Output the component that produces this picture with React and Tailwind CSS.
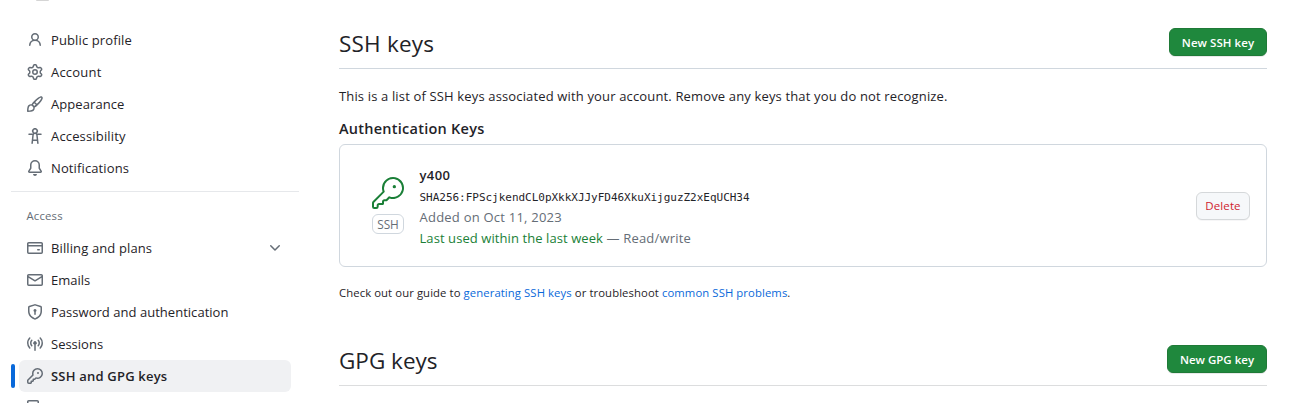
import { GoKey } from "react-icons/go";

const ICONS = {
  person: "M10.561 8.073a6.005 6.005 0 0 1 3.432 5.142.75.75 0 1 1-1.498.07 4.5 4.5 0 0 0-8.99 0 .75.75 0 0 1-1.498-.07 6.004 6.004 0 0 1 3.431-5.142 3.999 3.999 0 1 1 5.123 0ZM10.5 5a2.5 2.5 0 1 0-5 0 2.5 2.5 0 0 0 5 0Z",
  gear: "M8 0a8.2 8.2 0 0 1 .701.031C9.444.095 9.99.645 10.16 1.29l.288 1.107c.018.066.079.158.212.224.231.114.454.243.668.386.123.082.233.09.299.071l1.103-.303c.644-.176 1.392.021 1.82.63.27.385.506.792.704 1.218.315.675.111 1.422-.364 1.891l-.814.806c-.049.048-.098.147-.088.294.016.257.016.515 0 .772-.01.147.038.246.088.294l.814.806c.475.469.679 1.216.364 1.891a7.977 7.977 0 0 1-.704 1.217c-.428.61-1.176.807-1.82.63l-1.102-.302c-.067-.019-.177-.011-.3.071a5.909 5.909 0 0 1-.668.386c-.133.066-.194.158-.211.224l-.29 1.106c-.168.646-.715 1.196-1.458 1.26a8.006 8.006 0 0 1-1.402 0c-.743-.064-1.289-.614-1.458-1.26l-.289-1.106c-.018-.066-.079-.158-.212-.224a5.738 5.738 0 0 1-.668-.386c-.123-.082-.233-.09-.299-.071l-1.103.303c-.644.176-1.392-.021-1.82-.63a8.12 8.12 0 0 1-.704-1.218c-.315-.675-.111-1.422.363-1.891l.815-.806c.05-.048.098-.147.088-.294a6.214 6.214 0 0 1 0-.772c.01-.147-.038-.246-.088-.294l-.815-.806C.635 6.045.431 5.298.746 4.623a7.92 7.92 0 0 1 .704-1.217c.428-.61 1.176-.807 1.82-.63l1.102.302c.067.019.177.011.3-.071.214-.143.437-.272.668-.386.133-.066.194-.158.211-.224l.29-1.106C6.009.645 6.556.095 7.299.03 7.53.01 7.764 0 8 0Zm-.571 1.525c-.036.003-.108.036-.137.146l-.289 1.105c-.147.561-.549.967-.998 1.189-.173.086-.34.183-.5.29-.417.278-.97.423-1.529.27l-1.103-.303c-.109-.03-.175.016-.195.045-.22.312-.412.644-.573.99-.014.031-.021.11.059.19l.815.806c.411.406.562.957.53 1.456a4.709 4.709 0 0 0 0 .582c.032.499-.119 1.05-.53 1.456l-.815.806c-.081.08-.073.159-.059.19.162.346.353.677.573.989.02.03.085.076.195.046l1.102-.303c.56-.153 1.113-.008 1.53.27.161.107.328.204.501.29.447.222.85.629.997 1.189l.289 1.105c.029.109.101.143.137.146a6.6 6.6 0 0 0 1.142 0c.036-.003.108-.036.137-.146l.289-1.105c.147-.561.549-.967.998-1.189.173-.086.34-.183.5-.29.417-.278.97-.423 1.529-.27l1.103.303c.109.029.175-.016.195-.045.22-.313.411-.644.573-.99.014-.031.021-.11-.059-.19l-.815-.806c-.411-.406-.562-.957-.53-1.456a4.709 4.709 0 0 0 0-.582c-.032-.499.119-1.05.53-1.456l.815-.806c.081-.08.073-.159.059-.19a6.464 6.464 0 0 0-.573-.989c-.02-.03-.085-.076-.195-.046l-1.102.303c-.56.153-1.113.008-1.53-.27a4.44 4.44 0 0 0-.501-.29c-.447-.222-.85-.629-.997-1.189l-.289-1.105c-.029-.11-.101-.143-.137-.146a6.6 6.6 0 0 0-1.142 0ZM11 8a3 3 0 1 1-6 0 3 3 0 0 1 6 0ZM9.5 8a1.5 1.5 0 1 0-3.001.001A1.5 1.5 0 0 0 9.5 8Z",
  paintbrush: "M11.134 1.535c.7-.509 1.416-.942 2.076-1.155.649-.21 1.463-.267 2.069.34.603.601.568 1.411.368 2.07-.202.668-.624 1.39-1.125 2.096-1.011 1.424-2.496 2.987-3.775 4.249-1.098 1.084-2.132 1.839-3.04 2.3a3.744 3.744 0 0 1-1.055 3.217c-.431.431-1.065.691-1.657.861-.614.177-1.294.287-1.914.357A21.151 21.151 0 0 1 .797 16H.743l.007-.75H.749L.742 16a.75.75 0 0 1-.743-.742l.743-.008-.742.007v-.054a21.25 21.25 0 0 1 .13-2.284c.067-.647.187-1.287.358-1.914.17-.591.43-1.226.86-1.657a3.746 3.746 0 0 1 3.227-1.054c.466-.893 1.225-1.907 2.314-2.982 1.271-1.255 2.833-2.75 4.245-3.777ZM1.62 13.089c-.051.464-.086.929-.104 1.395.466-.018.932-.053 1.396-.104a10.511 10.511 0 0 0 1.668-.309c.526-.151.856-.325 1.011-.48a2.25 2.25 0 1 0-3.182-3.182c-.155.155-.329.485-.48 1.01a10.515 10.515 0 0 0-.309 1.67Zm10.396-10.34c-1.224.89-2.605 2.189-3.822 3.384l1.718 1.718c1.21-1.205 2.51-2.597 3.387-3.833.47-.662.78-1.227.912-1.662.134-.444.032-.551.009-.575h-.001V1.78c-.014-.014-.113-.113-.548.027-.432.14-.995.462-1.655.942Zm-4.832 7.266-.001.001a9.859 9.859 0 0 0 1.63-1.142L7.155 7.216a9.7 9.7 0 0 0-1.161 1.607c.482.302.889.71 1.19 1.192Z",
  accessibility: "M9.923 5.302c.063.063.122.129.178.198H14A.75.75 0 0 1 14 7h-3.3l.578 5.163.362 2.997a.75.75 0 0 1-1.49.18L9.868 13H6.132l-.282 2.34a.75.75 0 0 1-1.49-.18l.362-2.997L5.3 7H2a.75.75 0 0 1 0-1.5h3.9a2.54 2.54 0 0 1 .176-.198 3 3 0 1 1 3.847 0ZM9.2 7.073h-.001a1.206 1.206 0 0 0-2.398 0L6.305 11.5h3.39ZM9.5 3a1.5 1.5 0 1 0-3.001.001A1.5 1.5 0 0 0 9.5 3Z",
  bell: "M8 16a2 2 0 0 0 1.985-1.75c.017-.137-.097-.25-.235-.25h-3.5c-.138 0-.252.113-.235.25A2 2 0 0 0 8 16ZM3 5a5 5 0 0 1 10 0v2.947c0 .05.015.098.042.139l1.703 2.555A1.519 1.519 0 0 1 13.482 13H2.518a1.516 1.516 0 0 1-1.263-2.36l1.703-2.554A.255.255 0 0 0 3 7.947Zm5-3.5A3.5 3.5 0 0 0 4.5 5v2.947c0 .346-.102.683-.294.97l-1.703 2.556a.017.017 0 0 0-.003.01l.001.006c0 .002.002.004.004.006l.006.004.007.001h10.964l.007-.001.006-.004.004-.006.001-.007a.017.017 0 0 0-.003-.01l-1.703-2.554a1.745 1.745 0 0 1-.294-.97V5A3.5 3.5 0 0 0 8 1.5Z",
  card: "M10.75 9a.75.75 0 0 0 0 1.5h1.5a.75.75 0 0 0 0-1.5h-1.5ZM0 3.75C0 2.784.784 2 1.75 2h12.5c.966 0 1.75.784 1.75 1.75v8.5A1.75 1.75 0 0 1 14.25 14H1.75A1.75 1.75 0 0 1 0 12.25ZM14.5 6.5h-13v5.75c0 .138.112.25.25.25h12.5a.25.25 0 0 0 .25-.25Zm0-2.75a.25.25 0 0 0-.25-.25H1.75a.25.25 0 0 0-.25.25V5h13Z",
  mail: "M1.75 2h12.5c.966 0 1.75.784 1.75 1.75v8.5A1.75 1.75 0 0 1 14.25 14H1.75A1.75 1.75 0 0 1 0 12.25v-8.5C0 2.784.784 2 1.75 2ZM1.5 12.251c0 .138.112.25.25.25h12.5a.25.25 0 0 0 .25-.25V5.809L8.38 9.397a.75.75 0 0 1-.76 0L1.5 5.809v6.442Zm13-8.181v-.32a.25.25 0 0 0-.25-.25H1.75a.25.25 0 0 0-.25.25v.32L8 7.88Z",
  shield: "m8.533.133 5.25 1.68A1.75 1.75 0 0 1 15 3.48V7c0 1.566-.32 3.182-1.303 4.682-.983 1.498-2.585 2.813-5.032 3.855a1.697 1.697 0 0 1-1.33 0c-2.447-1.042-4.049-2.357-5.032-3.855C1.32 10.182 1 8.566 1 7V3.48a1.755 1.755 0 0 1 1.217-1.667l5.25-1.68a1.748 1.748 0 0 1 1.066 0Zm-.61 1.429.001.001-5.25 1.68a.251.251 0 0 0-.174.237V7c0 1.36.275 2.666 1.057 3.859.784 1.194 2.121 2.342 4.366 3.298a.196.196 0 0 0 .154 0c2.245-.957 3.582-2.103 4.366-3.297C13.225 9.666 13.5 8.358 13.5 7V3.48a.25.25 0 0 0-.174-.238l-5.25-1.68a.25.25 0 0 0-.153 0ZM9.5 6.5c0 .536-.286 1.032-.75 1.3v2.45a.75.75 0 0 1-1.5 0V7.8A1.5 1.5 0 1 1 9.5 6.5Z",
  broadcast: "M8.75 8.582v5.668a.75.75 0 0 1-1.5 0V8.582a1.75 1.75 0 1 1 1.5 0Zm3.983-7.125a.75.75 0 0 1 1.06.026A7.976 7.976 0 0 1 16 7c0 2.139-.84 4.083-2.207 5.517a.75.75 0 1 1-1.086-1.034A6.474 6.474 0 0 0 14.5 7a6.474 6.474 0 0 0-1.793-4.483.75.75 0 0 1 .026-1.06Zm-9.466 0c.3.286.312.76.026 1.06A6.474 6.474 0 0 0 1.5 7a6.47 6.47 0 0 0 1.793 4.483.75.75 0 0 1-1.086 1.034A7.973 7.973 0 0 1 0 7c0-2.139.84-4.083 2.207-5.517a.75.75 0 0 1 1.06-.026Zm8.556 2.321A4.988 4.988 0 0 1 13 7a4.988 4.988 0 0 1-1.177 3.222.75.75 0 1 1-1.146-.967A3.487 3.487 0 0 0 11.5 7c0-.86-.309-1.645-.823-2.255a.75.75 0 0 1 1.146-.967Zm-6.492.958A3.48 3.48 0 0 0 4.5 7a3.48 3.48 0 0 0 .823 2.255.75.75 0 0 1-1.146.967A4.981 4.981 0 0 1 3 7a4.982 4.982 0 0 1 1.188-3.236.75.75 0 1 1 1.143.972Z",
  key: "M10.5 0a5.499 5.499 0 1 1-1.288 10.848l-.932.932a.749.749 0 0 1-.53.22H7v.75a.749.749 0 0 1-.22.53l-.5.5a.749.749 0 0 1-.53.22H5v.75a.749.749 0 0 1-.22.53l-.5.5a.749.749 0 0 1-.53.22h-2A1.75 1.75 0 0 1 0 14.25v-2c0-.199.079-.389.22-.53l4.932-4.932A5.5 5.5 0 0 1 10.5 0Zm-4 5.5c-.001.431.069.86.205 1.269a.75.75 0 0 1-.181.768L1.5 12.56v1.69c0 .138.112.25.25.25h1.69l.06-.06v-1.19a.75.75 0 0 1 .75-.75h1.19l.06-.06v-1.19a.75.75 0 0 1 .75-.75h1.19l1.023-1.025a.75.75 0 0 1 .768-.18A4 4 0 1 0 6.5 5.5ZM11 6a1 1 0 1 1 0-2 1 1 0 0 1 0 2Z",
  chevron: "M12.78 5.22a.749.749 0 0 1 0 1.06l-4.25 4.25a.749.749 0 0 1-1.06 0L3.22 6.28a.749.749 0 1 1 1.06-1.06L8 8.939l3.72-3.719a.749.749 0 0 1 1.06 0Z",
  organization: "M1.75 0h8.5C11.216 0 12 .784 12 1.75v12.5c0 .966-.784 1.75-1.75 1.75h-8.5A1.75 1.75 0 0 1 0 14.25V1.75C0 .784.784 0 1.75 0Zm0 1.5a.25.25 0 0 0-.25.25v12.5c0 .138.112.25.25.25h8.5a.25.25 0 0 0 .25-.25V1.75a.25.25 0 0 0-.25-.25Z",
};

function Icon({ name }) {
  return (
    <svg viewBox="0 0 16 16" className="size-4 shrink-0 fill-[#656d76]" aria-hidden="true">
      <path fillRule="evenodd" d={ICONS[name]} />
    </svg>
  );
}

function NavItem({ icon, label, tracking, active, expandable }) {
  return (
    <li className="flex h-8 items-center">
      <span className={active ? "mr-1 h-6 w-1 rounded-md bg-[#0969da]" : "mr-1 h-6 w-1"} />
      <a
        className={`flex h-8 w-[272px] items-center gap-2 rounded-md px-2 text-[13px] ${tracking} ${
          active ? "bg-[#f0f1f3] font-[580]" : ""
        }`}
      >
        <Icon name={icon} />
        <span className="grow leading-5">{label}</span>
        {expandable && <Icon name="chevron" />}
      </a>
    </li>
  );
}

function SectionHeader({ title, action, titleTracking, buttonClass, ruleClass }) {
  return (
    <div className={`flex h-[41px] items-start justify-between border-b ${ruleClass}`}>
      <h2 className={`h-8 text-[22.5px] leading-8 ${titleTracking}`}>{title}</h2>
      <button
        className={`flex h-7 items-center justify-center rounded-md border border-[#1f7a37] bg-[#1f883d] pt-0.5 text-[11.5px] font-semibold text-white shadow-[0_1px_0_rgba(31,35,40,0.1)] ${buttonClass}`}
      >
        {action}
      </button>
    </div>
  );
}

export default function App() {
  return (
    <div className="flex h-[403px] w-[1316px] overflow-hidden bg-white font-['Open_Sans','Noto_Sans',sans-serif] text-[#1f2328]">
      <aside className="ml-[11px] w-[288px] shrink-0">
        <div className="flex h-6 items-start pl-[25px]">
          <span className="h-px w-[13px] rounded-b-full bg-[#d5d5d5]" />
        </div>
        <ul>
          <NavItem icon="person" label="Public profile" tracking="tracking-[0.12px]" />
          <NavItem icon="gear" label="Account" tracking="tracking-[0.2px]" />
          <NavItem icon="paintbrush" label="Appearance" tracking="tracking-[0.08px]" />
          <NavItem icon="accessibility" label="Accessibility" tracking="tracking-[0.16px]" />
          <NavItem icon="bell" label="Notifications" tracking="tracking-[0.12px]" />
        </ul>
        <div className="mt-[7px] border-t border-[#e6e8eb]" />
        <h3 className="mt-2 flex h-8 items-center pl-[15.5px] text-[11.3px] tracking-[0.2px] text-[#656d76]">Access</h3>
        <ul>
          <NavItem icon="card" label="Billing and plans" tracking="tracking-[0.12px]" expandable />
          <NavItem icon="mail" label="Emails" tracking="tracking-normal" />
          <NavItem icon="shield" label="Password and authentication" tracking="tracking-[0.03px]" />
          <NavItem icon="broadcast" label="Sessions" tracking="tracking-normal" />
          <NavItem icon="key" label="SSH and GPG keys" tracking="tracking-[0.2px]" active />
          <NavItem icon="organization" label="" tracking="" />
        </ul>
      </aside>

      <main className="ml-10 w-[928px] shrink-0 pt-7">
        <SectionHeader
          title="SSH keys"
          action="New SSH key"
          titleTracking="tracking-[0.2px]"
          buttonClass="w-[98px] tracking-[0.06px]"
          ruleClass="border-[#d0d7de]"
        />
        <p className="mt-[17px] h-[21px] text-[13px] leading-[21px] tracking-[0.15px]">
          This is a list of SSH keys associated with your account. Remove any keys that you do not recognize.
        </p>
        <h3 className="mt-[10px] h-6 text-[14.5px] leading-6 font-[580] tracking-[0.25px]">Authentication Keys</h3>

        <div className="mt-[3px] flex h-[123px] items-center rounded-md border border-[#d0d7de] pr-4 pl-8">
          <div className="flex w-8 flex-col items-center gap-[5px]">
            <GoKey className="size-8 text-[#1a7f37]" />
            <span className="flex h-5 w-8 items-center justify-center rounded-md border border-[#d0d7de] pt-px text-[11.8px] text-[#656d76]">
              SSH
            </span>
          </div>
          <div className="ml-[15.5px] grow pt-[3px] text-[13px] leading-[21px] text-[#656d76]">
            <div className="font-[580] tracking-[0.4px] text-[#1f2328]">y400</div>
            <div className="h-[21px] font-['DejaVu_Sans_Mono',monospace] text-[11px] leading-[23px] tracking-[-0.022px] text-[#1f2328]">
              SHA256:FPScjkendCL0pXkkXJJyFD46XkuXijguzZ2xEqUCH34
            </div>
            <div className="tracking-[0.23px]">Added on Oct 11, 2023</div>
            <div>
              <span className="tracking-[0.08px] text-[#1a7f37]">Last used within the last week</span>{" "}
              <span className="tracking-[0.2px]">— Read/write</span>
            </div>
          </div>
          <button className="flex h-7 w-[54px] items-center justify-center rounded-md border border-[#d5d8da] bg-[#f6f8fa] pt-px text-[11.5px] tracking-[0.1px] text-[#cf222e] shadow-[0_1px_0_rgba(31,35,40,0.04)]">
            Delete
          </button>
        </div>

        <p className="mt-4 h-5 text-[11.3px] leading-5 tracking-[0.09px]">
          Check out our guide to <a className="text-[#0969da]">generating SSH keys</a> or troubleshoot{" "}
          <a className="text-[#0969da]">common SSH problems</a>.
        </p>

        <div className="mt-[42px]">
          <SectionHeader
            title="GPG keys"
            action="New GPG key"
            titleTracking="tracking-normal"
            buttonClass="w-[100px] tracking-normal"
            ruleClass="border-[#dcddde]"
          />
        </div>
      </main>
    </div>
  );
}
